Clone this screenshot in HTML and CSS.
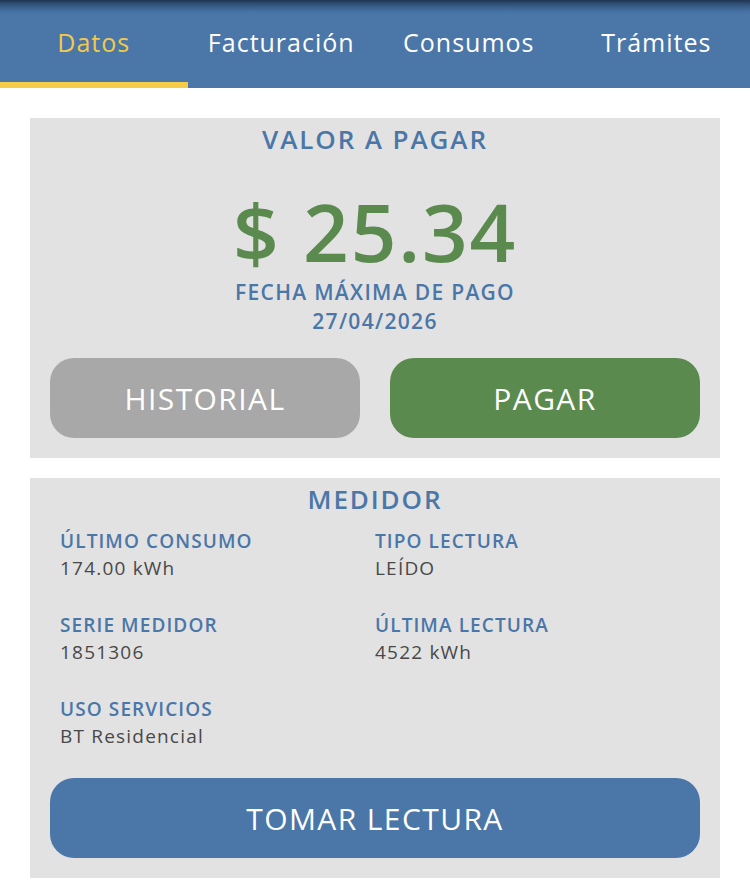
FILE: index.html
```html
<!DOCTYPE html>
<html lang="es">
<head>
<meta charset="utf-8">
<link rel="stylesheet" href="styles.css">
</head>
<body>
<nav class="tabs">
  <div class="tab active">Datos</div>
  <div class="tab">Facturación</div>
  <div class="tab">Consumos</div>
  <div class="tab">Trámites</div>
</nav>
<main class="content">
  <section class="card pay">
    <h2 class="card-title">VALOR A PAGAR</h2>
    <div class="amount">$ 25.34</div>
    <div class="due-label">FECHA MÁXIMA DE PAGO</div>
    <div class="due-date">27/04/2026</div>
    <div class="actions">
      <button class="btn gray">HISTORIAL</button>
      <button class="btn green">PAGAR</button>
    </div>
  </section>
  <section class="card meter">
    <h2 class="card-title">MEDIDOR</h2>
    <div class="grid">
      <div class="field"><div class="label">ÚLTIMO CONSUMO</div><div class="value">174.00 kWh</div></div>
      <div class="field"><div class="label">TIPO LECTURA</div><div class="value">LEÍDO</div></div>
      <div class="field"><div class="label">SERIE MEDIDOR</div><div class="value">1851306</div></div>
      <div class="field"><div class="label">ÚLTIMA LECTURA</div><div class="value">4522 kWh</div></div>
      <div class="field"><div class="label">USO SERVICIOS</div><div class="value">BT Residencial</div></div>
    </div>
    <button class="btn blue wide">TOMAR LECTURA</button>
  </section>
</main>
</body>
</html>
```
FILE: styles.css
```css
* { box-sizing: border-box; margin: 0; padding: 0; }
body {
  background: #ffffff;
  font-family: "Open Sans", "Liberation Sans", sans-serif;
  width: 750px;
  height: 893px;
  overflow: hidden;
}
.tabs {
  display: flex;
  height: 88px;
  background: linear-gradient(to bottom, #1f3550 0px, #34557e 5px, #4774a6 12px, #4a76a8 16px);
}
.tab {
  flex: 1;
  display: flex;
  align-items: center;
  justify-content: center;
  padding-top: 1px;
  color: #ffffff;
  font-size: 25px;
  font-weight: 400;
  letter-spacing: 1px;
  border-bottom: 6px solid transparent;
}
.tab.active {
  color: #f3c94b;
  border-bottom-color: #f5cc47;
}
.content {
  padding: 30px 30px 0;
  display: flex;
  flex-direction: column;
  gap: 20px;
}
.card {
  background: #e2e2e2;
  padding: 0 20px 20px;
  display: flex;
  flex-direction: column;
  align-items: center;
}
.card-title {
  font-size: 26px;
  font-weight: 600;
  color: #4a76a8;
  letter-spacing: 1.9px;
  line-height: 42px;
}
.amount {
  margin-top: 24px;
  margin-bottom: 1px;
  font-size: 80px;
  font-weight: 600;
  color: #5b8a4e;
  line-height: 93px;
  letter-spacing: 1.8px;
}
.due-label, .due-date {
  font-size: 21px;
  font-weight: 600;
  color: #4a76a8;
  line-height: 29px;
  letter-spacing: 1.3px;
}
.actions {
  margin-top: 22px;
  display: flex;
  gap: 30px;
  width: 100%;
}
.btn {
  border: none;
  height: 80px;
  border-radius: 24px;
  color: #ffffff;
  font-family: inherit;
  font-size: 30px;
  font-weight: 400;
  letter-spacing: 1.4px;
}
.actions .btn { flex: 1; }
.gray { background: #a8a8a8; }
.green { background: #5b8a4e; }
.blue { background: #4a76a8; }
.wide { width: 100%; margin-top: 28px; }
.grid {
  width: 100%;
  padding: 0 10px;
  display: grid;
  grid-template-columns: 315px 1fr;
  row-gap: 30px;
  margin-top: 8px;
}
.label {
  font-size: 19px;
  font-weight: 600;
  color: #4a76a8;
  line-height: 27px;
  letter-spacing: 1.1px;
}
.value {
  font-size: 19px;
  color: #484848;
  line-height: 27px;
  letter-spacing: 1.2px;
}
```
